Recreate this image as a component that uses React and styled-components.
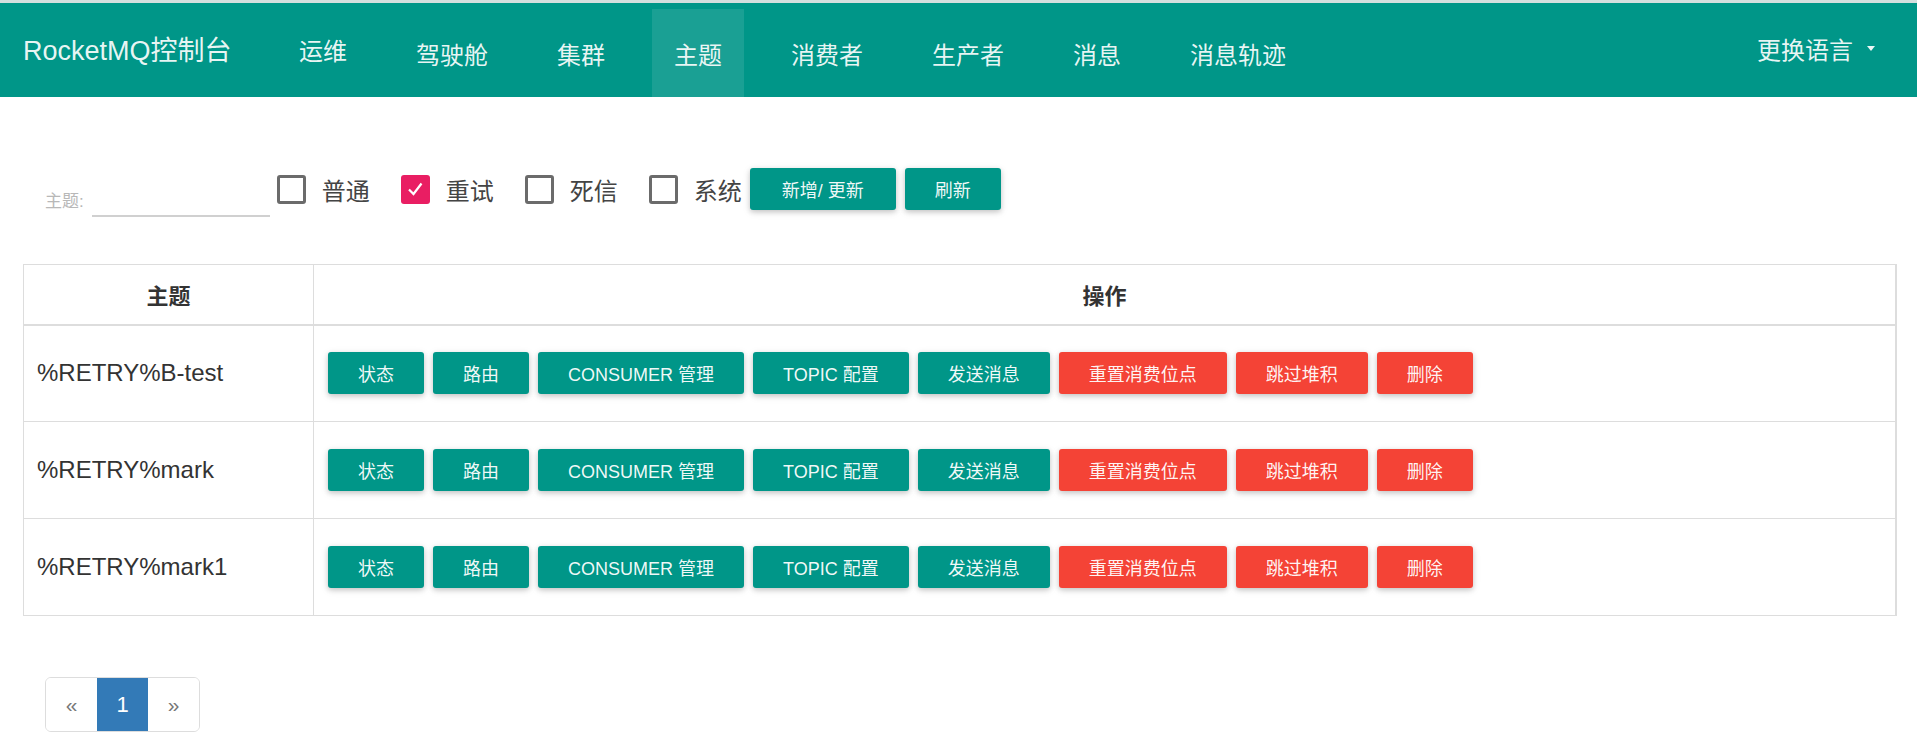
import React from "react";
import styled, { createGlobalStyle } from "styled-components";

const GlobalStyle = createGlobalStyle`
  html, body { margin: 0; padding: 0; background: #fff; }
  body {
    font-family: "Liberation Sans", "Noto Sans CJK SC", sans-serif;
    color: #333;
  }
  * { box-sizing: border-box; }
`;

const Header = styled.header`
  display: flex;
  align-items: stretch;
  height: 97px;
  border-top: 3px solid #d4dfde;
  background: #009688;
  color: rgba(255, 255, 255, 0.92);
`;

const Brand = styled.div`
  width: 277px;
  padding: 0 0 3px 23px;
  display: flex;
  align-items: center;
  font-size: 27px;
  white-space: nowrap;
`;

const NavList = styled.ul`
  list-style: none;
  margin: 6px 0 0;
  padding: 0;
  display: flex;
  gap: 25px;
`;

const NavItem = styled.li`
  display: flex;
  align-items: center;
  padding: 0 22px ${(p) => (p.$raised ? 7 : 0)}px;
  font-size: 24px;
  white-space: nowrap;
  background: ${(p) => (p.$active ? "rgba(255,255,255,0.1)" : "transparent")};
`;

const Lang = styled.div`
  margin-left: auto;
  display: flex;
  align-items: center;
  padding: 0 42px 3px 0;
  font-size: 24px;
  white-space: nowrap;
`;

const Caret = styled.span`
  display: inline-block;
  margin-left: 14px;
  width: 0;
  height: 0;
  border-top: 5px solid rgba(255, 255, 255, 0.92);
  border-left: 4px solid transparent;
  border-right: 4px solid transparent;
`;

const Main = styled.main`
  padding: 0 20px 0 23px;
`;

const Toolbar = styled.div`
  display: flex;
  align-items: center;
  height: 42px;
  margin-top: 71px;
`;

const FilterGroup = styled.div`
  display: flex;
  align-items: flex-end;
  align-self: flex-end;
  margin: 0 7px -7px 22px;
  gap: 8px;
`;

const FilterLabel = styled.label`
  font-size: 17px;
  line-height: 20px;
  padding-bottom: 5px;
  color: #b8b8b8;
  white-space: nowrap;
`;

const FilterInput = styled.input`
  width: 178px;
  height: 32px;
  border: none;
  border-bottom: 2px solid #d0d0d0;
  outline: none;
  background: transparent;
  font-size: 17px;
  font-family: inherit;
`;

const CheckGroup = styled.div`
  display: flex;
  align-items: center;
  gap: 31px;
  margin-right: 8px;
`;

const CheckItem = styled.label`
  display: flex;
  align-items: center;
  gap: 16px;
  font-size: 24px;
  color: #444;
  white-space: nowrap;
`;

const Box = styled.span`
  width: 29px;
  height: 29px;
  border-radius: 3px;
  display: flex;
  align-items: center;
  justify-content: center;
  border: ${(p) => (p.$checked ? "none" : "3px solid #6b6b6b")};
  background: ${(p) => (p.$checked ? "#e91e63" : "transparent")};
`;

const ButtonRow = styled.div`
  display: flex;
  align-items: center;
  gap: 9px;
`;

const Button = styled.button`
  height: 42px;
  padding: 0 ${(p) => p.$pad || 30}px;
  border: none;
  border-radius: 3px;
  font-family: inherit;
  font-size: 18px;
  color: rgba(255, 255, 255, 0.94);
  white-space: nowrap;
  background: ${(p) => (p.$danger ? "#f44336" : "#009688")};
  box-shadow: 0 2px 5px rgba(0, 0, 0, 0.16), 0 2px 8px rgba(0, 0, 0, 0.1);
  cursor: pointer;
`;

const Table = styled.table`
  width: 100%;
  margin-top: 54px;
  border-collapse: collapse;
  border: 1px solid #ddd;
  border-right-width: 2px;
`;

const Th = styled.th`
  height: 60px;
  padding: 0 15px;
  font-size: 22px;
  font-weight: bold;
  color: #333;
  text-align: center;
  border: 1px solid #ddd;
  border-bottom-width: 2px;
  width: ${(p) => p.$w || "auto"};
`;

const Td = styled.td`
  height: 97px;
  padding: 0 15px 0 ${(p) => (p.$first ? 13 : 14)}px;
  font-size: 24px;
  color: #333;
  vertical-align: middle;
  border: 1px solid #ddd;
`;

const Pager = styled.ul`
  list-style: none;
  display: inline-flex;
  margin: 61px 0 0 22px;
  padding: 0;
  border: 1px solid #ddd;
  border-radius: 6px;
  overflow: hidden;
`;

const PageItem = styled.li`
  width: 51px;
  height: 53px;
  display: flex;
  align-items: center;
  justify-content: center;
  font-size: ${(p) => (p.$active ? "22px" : "21px")};
  color: ${(p) => (p.$active ? "#fff" : "#777")};
  background: ${(p) => (p.$active ? "#337ab7" : "#fff")};
`;

const navItems = ["运维", "驾驶舱", "集群", "主题", "消费者", "生产者", "消息", "消息轨迹"];
const checks = [
  { label: "普通", checked: false },
  { label: "重试", checked: true },
  { label: "死信", checked: false },
  { label: "系统", checked: false },
];
const topics = ["%RETRY%B-test", "%RETRY%mark", "%RETRY%mark1"];
const actions = [
  { t: "状态" },
  { t: "路由" },
  { t: "CONSUMER 管理" },
  { t: "TOPIC 配置" },
  { t: "发送消息" },
  { t: "重置消费位点", danger: true },
  { t: "跳过堆积", danger: true },
  { t: "删除", danger: true },
];

export default function App() {
  return (
    <>
      <GlobalStyle />
      <Header>
        <Brand>RocketMQ控制台</Brand>
        <NavList>
          {navItems.map((n, i) => (
            <NavItem key={n} $active={n === "主题"} $raised={i === 0}>
              {n}
            </NavItem>
          ))}
        </NavList>
        <Lang>
          更换语言
          <Caret />
        </Lang>
      </Header>
      <Main>
        <Toolbar>
          <FilterGroup>
            <FilterLabel>主题:</FilterLabel>
            <FilterInput />
          </FilterGroup>
          <CheckGroup>
            {checks.map((c) => (
              <CheckItem key={c.label}>
                <Box $checked={c.checked}>
                  {c.checked && (
                    <svg width="20" height="20" viewBox="0 0 20 20">
                      <polyline points="4,10.5 8.5,15 16.5,4.5" fill="none" stroke="#fff" strokeWidth="2.2" />
                    </svg>
                  )}
                </Box>
                {c.label}
              </CheckItem>
            ))}
          </CheckGroup>
          <ButtonRow>
            <Button $pad={32}>新增/ 更新</Button>
            <Button>刷新</Button>
          </ButtonRow>
        </Toolbar>
        <Table>
          <thead>
            <tr>
              <Th $w="290px">主题</Th>
              <Th>操作</Th>
            </tr>
          </thead>
          <tbody>
            {topics.map((t) => (
              <tr key={t}>
                <Td $first>{t}</Td>
                <Td>
                  <ButtonRow>
                    {actions.map((a) => (
                      <Button key={a.t} $danger={a.danger}>
                        {a.t}
                      </Button>
                    ))}
                  </ButtonRow>
                </Td>
              </tr>
            ))}
          </tbody>
        </Table>
        <Pager>
          <PageItem>«</PageItem>
          <PageItem $active>1</PageItem>
          <PageItem>»</PageItem>
        </Pager>
      </Main>
    </>
  );
}
